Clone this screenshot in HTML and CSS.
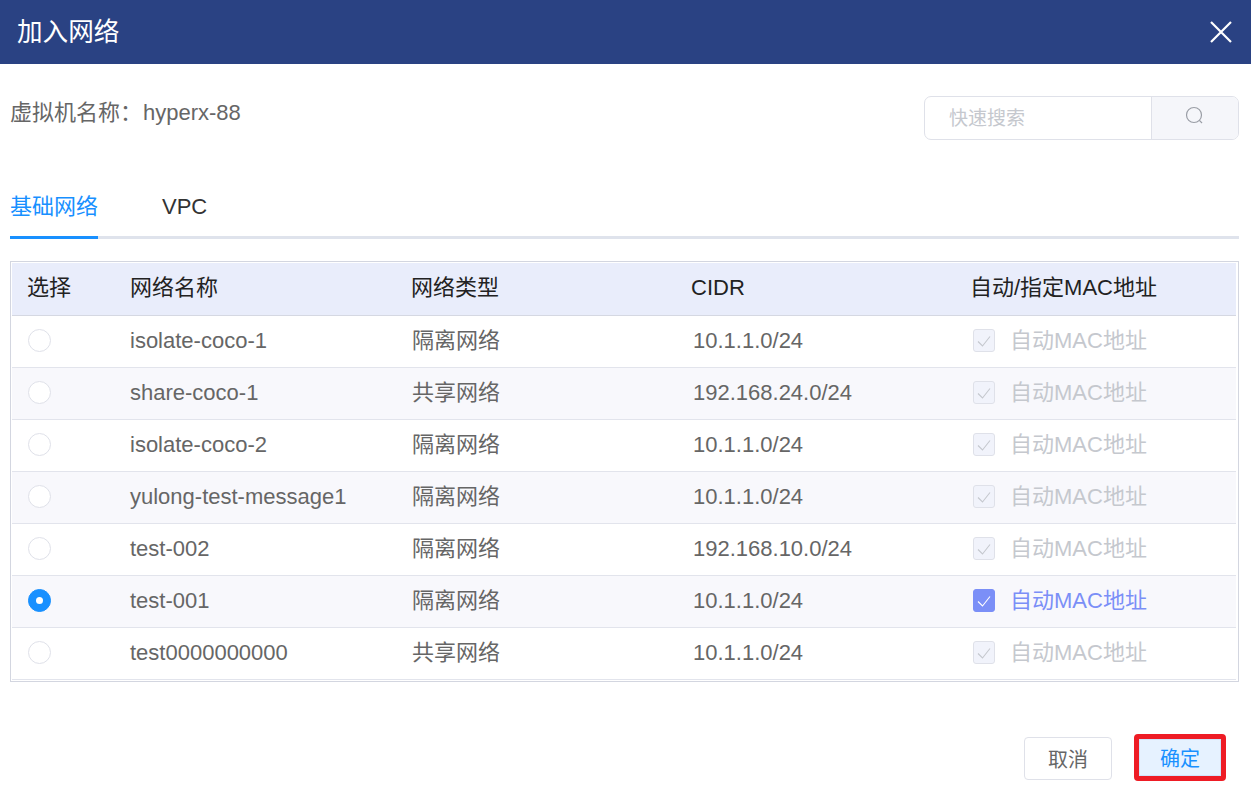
FILE: index.html
```html
<!DOCTYPE html>
<html lang="zh-CN">
<head>
<meta charset="utf-8">
<title>加入网络</title>
<link rel="stylesheet" href="styles.css">
</head>
<body>
<div class="dialog">
  <header class="dialog-head">
    <h1 class="dialog-title">加入网络</h1>
    <svg class="close-icon" viewBox="0 0 24 24" width="24" height="24"><path d="M2 2 L22 22 M22 2 L2 22" stroke="#fff" stroke-width="2.2" fill="none"/></svg>
  </header>
  <main class="dialog-body">
    <div class="top-row">
      <div class="vm-name">虚拟机名称：<span class="vm-value">hyperx-88</span></div>
      <div class="search">
        <div class="search-input">快速搜索</div>
        <div class="search-btn">
          <svg viewBox="0 0 20 20" width="20" height="20"><circle cx="9" cy="9" r="7.5" stroke="#9a9ea6" stroke-width="1.2" fill="none"/><path d="M14.4 14.4 L17 17" stroke="#9a9ea6" stroke-width="1.2" fill="none"/></svg>
        </div>
      </div>
    </div>
    <nav class="tabs">
      <div class="tab tab-active">基础网络</div>
      <div class="tab">VPC</div>
    </nav>
    <div class="table-wrap">
      <table class="net-table">
        <colgroup><col class="c1"><col class="c2"><col class="c3"><col class="c4"><col class="c5"></colgroup>
        <thead>
          <tr><th>选择</th><th>网络名称</th><th>网络类型</th><th>CIDR</th><th>自动/指定MAC地址</th></tr>
        </thead>
        <tbody>
          <tr><td><span class="radio"></span></td><td>isolate-coco-1</td><td><span class="type">隔离网络</span></td><td><span class="shift">10.1.1.0/24</span></td><td><span class="mac"><span class="check"><svg viewBox="0 0 22 22" width="22" height="22"><path d="M5 11.5 L9.5 16 L17 6.5" class="tick"/></svg></span>自动MAC地址</span></td></tr>
          <tr class="alt"><td><span class="radio"></span></td><td>share-coco-1</td><td><span class="type">共享网络</span></td><td><span class="shift">192.168.24.0/24</span></td><td><span class="mac"><span class="check"><svg viewBox="0 0 22 22" width="22" height="22"><path d="M5 11.5 L9.5 16 L17 6.5" class="tick"/></svg></span>自动MAC地址</span></td></tr>
          <tr><td><span class="radio"></span></td><td>isolate-coco-2</td><td><span class="type">隔离网络</span></td><td><span class="shift">10.1.1.0/24</span></td><td><span class="mac"><span class="check"><svg viewBox="0 0 22 22" width="22" height="22"><path d="M5 11.5 L9.5 16 L17 6.5" class="tick"/></svg></span>自动MAC地址</span></td></tr>
          <tr class="alt"><td><span class="radio"></span></td><td>yulong-test-message1</td><td><span class="type">隔离网络</span></td><td><span class="shift">10.1.1.0/24</span></td><td><span class="mac"><span class="check"><svg viewBox="0 0 22 22" width="22" height="22"><path d="M5 11.5 L9.5 16 L17 6.5" class="tick"/></svg></span>自动MAC地址</span></td></tr>
          <tr><td><span class="radio"></span></td><td>test-002</td><td><span class="type">隔离网络</span></td><td><span class="shift">192.168.10.0/24</span></td><td><span class="mac"><span class="check"><svg viewBox="0 0 22 22" width="22" height="22"><path d="M5 11.5 L9.5 16 L17 6.5" class="tick"/></svg></span>自动MAC地址</span></td></tr>
          <tr class="alt"><td><span class="radio radio-on"></span></td><td>test-001</td><td><span class="type">隔离网络</span></td><td><span class="shift">10.1.1.0/24</span></td><td><span class="mac mac-on"><span class="check"><svg viewBox="0 0 22 22" width="22" height="22"><path d="M5 11.5 L9.5 16 L17 6.5" class="tick"/></svg></span>自动MAC地址</span></td></tr>
          <tr><td><span class="radio"></span></td><td>test0000000000</td><td><span class="type">共享网络</span></td><td><span class="shift">10.1.1.0/24</span></td><td><span class="mac"><span class="check"><svg viewBox="0 0 22 22" width="22" height="22"><path d="M5 11.5 L9.5 16 L17 6.5" class="tick"/></svg></span>自动MAC地址</span></td></tr>
        </tbody>
      </table>
    </div>
    <footer class="actions">
      <button class="btn btn-plain">取消</button>
      <div class="btn-mark"><button class="btn btn-primary">确定</button></div>
    </footer>
  </main>
</div>
</body>
</html>
```

FILE: styles.css
```css
* { box-sizing: border-box; }
html, body { margin: 0; padding: 0; background: #fff; }
body {
  width: 1251px;
  height: 809px;
  overflow: hidden;
  font-family: "Liberation Sans", "Noto Sans CJK SC", sans-serif;
  color: #666;
}
.dialog-head {
  height: 64px;
  background: #2a4283;
  display: flex;
  align-items: center;
  justify-content: space-between;
  padding: 0 18px 0 17px;
}
.dialog-title { margin: 0; font-size: 25.6px; font-weight: 400; color: #fff; line-height: 62px; }
.close-icon { display: block; }
.dialog-body { padding: 32px 12px 0 10px; }
.top-row { display: flex; justify-content: space-between; align-items: flex-start; height: 44px; }
.vm-name { font-size: 22px; line-height: 34px; color: #666; }
.vm-value { margin-left: 1px; }
.search { display: flex; width: 315px; height: 44px; border: 1px solid #dfe1e9; border-radius: 7px; overflow: hidden; }
.search-input { flex: 1; padding-left: 24px; font-size: 19px; line-height: 44px; color: #c5c8ce; }
.search-btn { width: 87px; background: #f5f6fa; border-left: 1px solid #dfe1e9; display: flex; align-items: center; justify-content: center; padding-bottom: 4px; }
.search-btn svg { display: block; }
.tabs { display: flex; margin-top: 40px; height: 59px; border-bottom: 3px solid #dfe3ec; }
.tab { font-size: 22px; line-height: 54px; height: 59px; margin-right: 64px; color: #333; }
.tab-active { color: #1890ff; border-bottom: 3px solid #1890ff; }
.table-wrap { margin-top: 22px; width: 1229px; height: 421px; border: 1px solid #d3d6e0; padding: 1px; }
.net-table { width: 1224px; border-collapse: separate; border-spacing: 0; table-layout: fixed; font-size: 22px; line-height: 26px; }
.c1 { width: 102px; }
.c2 { width: 281px; }
.c3 { width: 280px; }
.c4 { width: 280px; }
.c5 { width: 281px; }
.net-table th { height: 53px; background: #e9edfb; color: #222; font-weight: 400; text-align: left; padding: 0 0 2px 16px; border-bottom: 1px solid #d5d8e2; }
.net-table th:first-child, .net-table th:last-child { padding-left: 15px; }
.net-table td { height: 52px; padding: 0 0 2px 16px; border-bottom: 1px solid #e2e4ec; color: #666; white-space: nowrap; }
.net-table .alt td { background: #f8f8fc; }
.shift { padding-left: 2px; }
.type { padding-left: 1px; }
.radio { display: block; width: 23px; height: 23px; border: 1px solid #dfe1e9; border-radius: 50%; background: #fff; position: relative; }
.radio-on { background: #1890ff; border-color: #1890ff; }
.radio-on::after { content: ""; position: absolute; left: 7px; top: 7px; width: 7px; height: 7px; border-radius: 50%; background: #fff; }
.mac { display: flex; align-items: center; gap: 15px; padding-left: 2px; color: #c5c8ce; }
.check { display: block; width: 22px; height: 23px; border: 1px solid #dfe1e9; border-radius: 3px; background: #f1f3fb; flex: none; position: relative; }
.check svg { display: block; position: absolute; left: -1px; top: 0; }
.tick { fill: none; stroke: #c5c8ce; stroke-width: 1.1; }
.mac-on { color: #7b8ff7; }
.mac-on .check { background: #7b8ff7; border-color: #7b8ff7; }
.mac-on .tick { stroke: #fff; }
.actions { display: flex; justify-content: flex-end; align-items: flex-end; gap: 22px; margin-top: 52px; padding-right: 13px; }
.btn { width: 88px; height: 43px; border: 1px solid #dfe1e9; border-radius: 4px; background: #fff; color: #666; font-family: inherit; font-size: 20px; padding: 0; }
.btn-plain { margin-bottom: 1px; }
.btn-mark { border: 5px solid #ee1c25; border-radius: 4px; }
.btn-primary { display: block; width: 82px; height: 37px; border: 1px solid #cfe4fb; border-radius: 0; background: #e6f2ff; color: #1890ff; }
```
